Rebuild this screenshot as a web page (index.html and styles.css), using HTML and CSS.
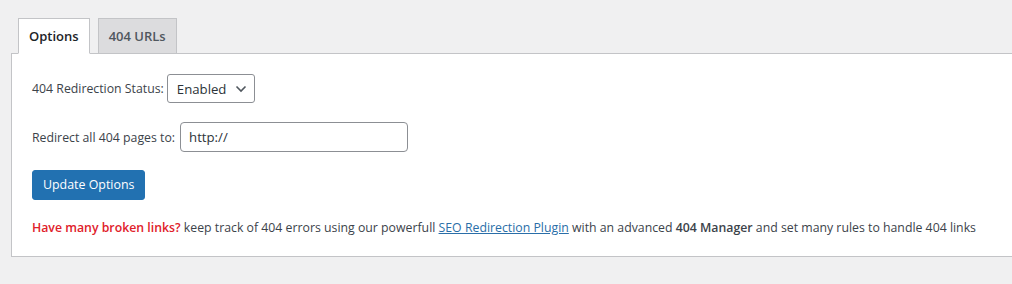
FILE: index.html
```html
<!DOCTYPE html>
<html>
<head>
<meta charset="utf-8">
<link rel="stylesheet" href="styles.css">
</head>
<body>
<div class="wrap">
  <nav class="tabs">
    <a class="tab active" href="#">Options</a>
    <a class="tab" href="#">404 URLs</a>
  </nav>
  <div class="panel">
    <div class="row row-status">
      <label class="label">404 Redirection Status:</label>
      <div class="select">
        <span>Enabled</span>
        <svg class="chev" width="12" height="8" viewBox="0 0 12 8"><path d="M1.5 1.5 L6 6 L10.5 1.5" fill="none" stroke="#50575e" stroke-width="1.6"/></svg>
      </div>
    </div>
    <div class="row row-url">
      <label class="label label-url">Redirect all 404 pages to:</label>
      <div class="input">http://</div>
    </div>
    <button class="btn">Update Options</button>
    <p class="note"><b class="warn">Have many broken links?</b> keep track of 404 errors using our powerfull <a class="link" href="#">SEO Redirection Plugin</a> with an advanced <b>404 Manager</b> and set many rules to handle 404 links</p>
  </div>
</div>
</body>
</html>
```
FILE: styles.css
```css
html, body {
  margin: 0;
  padding: 0;
  background: #f0f0f1;
}
body {
  font-family: "Open Sans", "Noto Sans", sans-serif;
  font-size: 12.3px;
  color: #3c434a;
}
.wrap {
  padding-top: 18px;
  margin-left: 11px;
}
.tabs {
  display: flex;
  gap: 8px;
  padding-left: 7px;
  position: relative;
  z-index: 1;
}
.tab {
  display: block;
  box-sizing: border-box;
  height: 36px;
  padding: 0 10px;
  line-height: 34px;
  border: 1px solid #c3c4c7;
  background: #dcdcde;
  color: #50575e;
  font-size: 13px;
  font-weight: 600;
  text-decoration: none;
  margin-bottom: -1px;
}
.tab.active {
  background: #fff;
  color: #1d2327;
  border-bottom-color: #fff;
}
.panel {
  background: #fff;
  border: 1px solid #c3c4c7;
  border-right: none;
  padding: 20px 20px 19px 20px;
}
.row {
  display: flex;
  align-items: center;
}
.row-status {
  height: 29px;
  margin-bottom: 19px;
}
.row-url {
  height: 30px;
  margin-bottom: 18px;
}
.label {
  margin-right: 3px;
}
.label-url {
  margin-right: 5px;
}
.select {
  box-sizing: border-box;
  width: 88px;
  height: 29px;
  border: 1px solid #8c8f94;
  border-radius: 3px;
  display: flex;
  align-items: center;
  justify-content: space-between;
  padding: 0 7px 0 9px;
  font-size: 13.2px;
  color: #2c3338;
}
.chev {
  display: block;
}
.input {
  box-sizing: border-box;
  width: 228px;
  height: 30px;
  border: 1px solid #8c8f94;
  border-radius: 4px;
  padding: 0 8px;
  line-height: 28px;
  font-size: 13.2px;
  color: #2c3338;
}
.btn {
  display: block;
  box-sizing: border-box;
  height: 30px;
  padding: 0 10px;
  background: #2271b1;
  border: 1px solid #2271b1;
  border-radius: 3px;
  color: #fff;
  font-family: inherit;
  font-size: 12.4px;
  line-height: 28px;
}
.note {
  margin: 19px 0 0 0;
  line-height: 18px;
  white-space: nowrap;
  font-size: 12.3px;
}
.warn {
  color: #e0202a;
}
.note b {
  font-weight: 600;
}
.link {
  color: #2a6ea8;
  text-decoration: underline;
}
```
